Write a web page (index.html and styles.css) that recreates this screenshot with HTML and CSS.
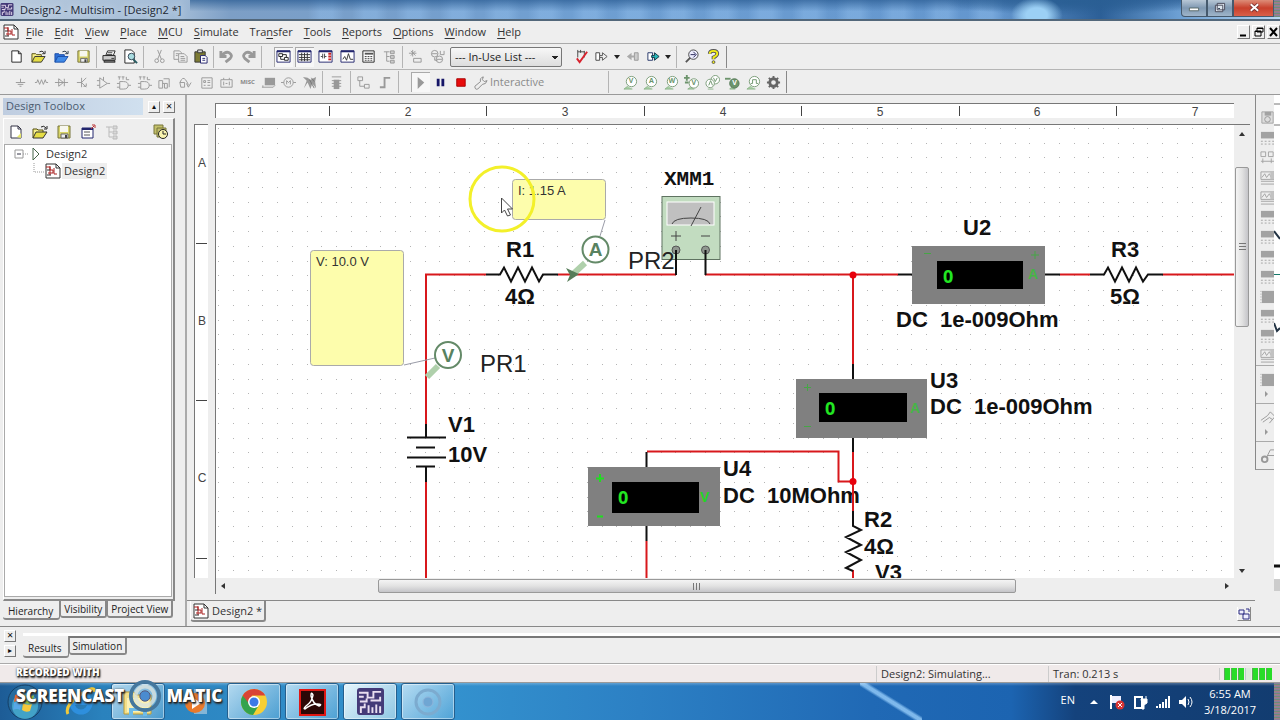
FILE: index.html
```html
<!DOCTYPE html>
<html lang="en">
<head>
<meta charset="utf-8">
<title>Design2 - Multisim - [Design2 *]</title>
<link rel="stylesheet" href="styles.css">
</head>
<body>
<svg class="defs" aria-hidden="true">
  <defs>
    <symbol id="new" viewBox="0 0 16 16"><path d="M3 2h7l3 3v9H3z" fill="#fff" stroke="#222"/><path d="M10 2v3h3" fill="none" stroke="#222"/></symbol>
    <symbol id="newy" viewBox="0 0 16 16"><path d="M3 2h7l3 3v9H3z" fill="#fff" stroke="#334"/><path d="M10 2v3h3" fill="none" stroke="#334"/><path d="M9 13l4-4v5z" fill="#e8e86a"/></symbol>
    <symbol id="open" viewBox="0 0 16 16"><path d="M1 14V5h4l1 1h5v2" fill="#f6f08a" stroke="#554f10"/><path d="M1 14l3-6h11l-4 6z" fill="#e5dd45" stroke="#333"/><path d="M9 3q3-2 5 1m1-2v3h-3" fill="none" stroke="#222"/></symbol>
    <symbol id="openb" viewBox="0 0 16 16"><path d="M1 14V5h4l1 1h5v2" fill="#2d6fd6" stroke="#1c4ea8"/><path d="M1 14l3-6h11l-4 6z" fill="#3f8ae8" stroke="#1c4ea8"/><path d="M9 3q3-2 5 1m1-2v3h-3" fill="none" stroke="#234"/></symbol>
    <symbol id="save" viewBox="0 0 16 16"><path d="M2 2h12v12H2z" fill="#d8d468" stroke="#77743a"/><path d="M4 2h8v6H4z" fill="#f7f7ee"/><path d="M5 10h7v4H5z" fill="#eee" stroke="#666"/><path d="M9 11h2v3H9z" fill="#444"/></symbol>
    <symbol id="print" viewBox="0 0 16 16"><path d="M4 7l2-5h8l-2 5z" fill="#fff" stroke="#222"/><path d="M1 7h13v5H1z" fill="#ccc" stroke="#222"/><path d="M3 12h10l1 2H2z" fill="#888" stroke="#222"/><path d="M6 4h5M5 6h6M10 10h3" stroke="#333"/></symbol>
    <symbol id="preview" viewBox="0 0 16 16"><path d="M2 1h7l3 3v11H2z" fill="#fff" stroke="#222"/><circle cx="9" cy="8" r="3.500" fill="#a9dce0" stroke="#345"/><path d="M11 11l4 4" stroke="#265a60" stroke-width="2"/></symbol>
    <symbol id="cut" viewBox="0 0 16 16"><g fill="none" stroke="#999"><path d="M6 1l4 10M10 1L6 11"/><circle cx="5" cy="12.500" r="2"/><circle cx="11" cy="12.500" r="2"/></g></symbol>
    <symbol id="copy" viewBox="0 0 16 16"><g fill="#eee" stroke="#999"><path d="M1 2h6l2 2v7H1z"/><path d="M6 5h6l3 3v6H6z"/><path d="M8 8h4M8 10h5M8 12h5M3 5h3M3 7h2"/></g></symbol>
    <symbol id="paste" viewBox="0 0 16 16"><path d="M2 3h11v11H2z" fill="#7d7b35" stroke="#333"/><path d="M5 1h5v3H5z" fill="#ddd" stroke="#333"/><path d="M8 7h5l2 2v6H8z" fill="#fff" stroke="#23236d"/><path d="M10 10h3M10 12h3" stroke="#23236d"/></symbol>
    <symbol id="undo" viewBox="0 0 16 16"><path d="M2 2v6h6M3 7q4-5 8-3 4 3 1 6l-5 4" fill="none" stroke="#999" stroke-width="3"/></symbol>
    <symbol id="redo" viewBox="0 0 16 16"><path d="M14 2v6H8M13 7Q9 2 5 4q-4 3-1 6l5 4" fill="none" stroke="#999" stroke-width="3"/></symbol>
    <symbol id="vtree" viewBox="0 0 16 16"><path d="M1 2h14v12H1z" fill="#fff" stroke="#22266e"/><path d="M1 2.500h14" stroke="#22266e" stroke-width="2"/><path d="M3 5h4v3H3zM9 9h4v3H9zM5 8v3h4M7 6h4v3" fill="none" stroke="#222"/></symbol>
    <symbol id="vgrid" viewBox="0 0 16 16"><path d="M1 2h14v12H1z" fill="#fff" stroke="#22266e"/><path d="M1 2.500h14" stroke="#22266e" stroke-width="2"/><path d="M5 4v9M8 4v9M11 4v9M2 6h12M2 9h12M2 11.500h12" stroke="#333"/></symbol>
    <symbol id="vcomp" viewBox="0 0 16 16"><path d="M1 2h14v12H1z" fill="#fff" stroke="#22266e"/><path d="M1 2.500h14" stroke="#22266e" stroke-width="2"/><path d="M3 8h2M5 5v5M7 5v5M7 8h2" stroke="#444"/><path d="M11 5h3M11 8h3M11 11h3" stroke="#c22" stroke-width="2"/></symbol>
    <symbol id="vgraph" viewBox="0 0 16 16"><path d="M1 2h14v12H1z" fill="#fff" stroke="#22266e"/><path d="M1 2.500h14" stroke="#22266e" stroke-width="2"/><path d="M3 11l2-3 2 4 2-7 2 6h3" fill="none" stroke="#333"/></symbol>
    <symbol id="vcalc" viewBox="0 0 16 16"><path d="M2 2h12v12H2z" fill="#fff" stroke="#222"/><path d="M4 5h9" stroke="#555" stroke-width="2"/><path d="M4 8h9M4 10h9M4 12h9" stroke="#444" stroke-dasharray="2 1"/></symbol>
    <symbol id="vhier" viewBox="0 0 16 16"><g fill="none" stroke="#999"><path d="M2 3h6M5 3v10h3M5 8h3"/><path d="M9 2h4v3H9zM9 7h4v3H9zM9 12h4v3H9z" fill="#ccc"/></g></symbol>
    <symbol id="place" viewBox="0 0 16 16"><g fill="none" stroke="#999"><path d="M5 1v7M1 4.500h8M3 2l5 5M8 2L3 7M6 10h8v4H6z"/></g></symbol>
    <symbol id="db" viewBox="0 0 16 16"><g fill="none" stroke="#999"><circle cx="5" cy="5" r="3.500"/><circle cx="10" cy="11" r="3.500"/><path d="M2 5h6M7 11h6M11 2v4h4V2M5 9v3h3"/></g></symbol>
    <symbol id="erc" viewBox="0 0 16 16"><path d="M4 1v8M4 3h7M7 1v3M11 2v7" stroke="#444" fill="none"/><path d="M3 10l3 4 8-11" fill="none" stroke="#d8222e" stroke-width="2"/></symbol>
    <symbol id="fwd" viewBox="0 0 16 16"><path d="M2 4h4v8H2z" fill="#fff" stroke="#444"/><path d="M6 7h3V4l5 4-5 4V9H6z" fill="#eee" stroke="#555"/></symbol>
    <symbol id="back" viewBox="0 0 16 16"><path d="M10 4h4v8h-4z" fill="#ccc" stroke="#999"/><path d="M10 7H7V4L2 8l5 4v-3h3z" fill="#aaa"/></symbol>
    <symbol id="fwdc" viewBox="0 0 16 16"><path d="M2 4h5v8H2z" fill="#fff" stroke="#236"/><path d="M6 7h3V4l5 4-5 4V9H6z" fill="#27b7b7" stroke="#134"/></symbol>
    <symbol id="find" viewBox="0 0 16 16"><path d="M7 9l-5 5" stroke="#555" stroke-width="2"/><circle cx="10" cy="6" r="5" fill="#eef" stroke="#444"/><path d="M7 6h5M10 3l3 3-3 3" stroke="#225" fill="none"/></symbol>
    <symbol id="help" viewBox="0 0 16 16"><path d="M4 5q0-3 4-3t4 3q0 2-4 4v2" fill="none" stroke="#555" stroke-width="4"/><path d="M4 5q0-3 4-3t4 3q0 2-4 4v2" fill="none" stroke="#f3ef16" stroke-width="2"/><circle cx="8" cy="14" r="1.500" fill="#f3ef16" stroke="#555"/></symbol>
    <symbol id="gnd" viewBox="0 0 16 16"><path d="M8 4v4M3 8h10M5 10h6M7 12h2" stroke="#999" fill="none"/></symbol>
    <symbol id="res" viewBox="0 0 16 16"><path d="M1 8h2l1-3 2 5 2-5 2 5 2-5 1 3h2" stroke="#999" fill="none"/></symbol>
    <symbol id="diode" viewBox="0 0 16 16"><path d="M1 8h14M5 4v8l5-4zM11 4v8" stroke="#999" fill="none"/></symbol>
    <symbol id="bjt" viewBox="0 0 16 16"><path d="M2 8h5M7 3v10M7 8l5-5M7 8l5 5M9 12h3v-3" stroke="#999" fill="none"/></symbol>
    <symbol id="opamp" viewBox="0 0 16 16"><path d="M4 3v11l8-5zM1 6h3M1 11h3M12 9h3M8 2v4" stroke="#999" fill="none"/></symbol>
    <symbol id="ttl" viewBox="0 0 16 16"><path d="M2 2h3M3.500 2v3M6 2h3M7.500 2v3M11 2v3h3M4 7h4q5 0 5 4t-5 4H4zM1 9h3M1 13h3M13 11h3" stroke="#999" fill="none"/></symbol>
    <symbol id="misd" viewBox="0 0 16 16"><path d="M2 14V6h4v8zM8 14V9h3v5zM7 4h6v9M6 9h2" stroke="#999" fill="none"/></symbol>
    <symbol id="mixed" viewBox="0 0 16 16"><path d="M2 8q3-7 6-3t3 6M2 8h5v5H3zM9 9l2 4 3-5" stroke="#999" fill="none"/></symbol>
    <symbol id="ind" viewBox="0 0 16 16"><path d="M3 3h11v11H3zM5 6h2v2H5zM9 6h3M9 8h3M5 11h2M9 11h3" stroke="#999" fill="none"/></symbol>
    <symbol id="pow" viewBox="0 0 16 16"><path d="M2 5h12v8H2zM5 3v2M11 3v2M5 7v4M11 7v4M7 9h2" stroke="#999" fill="none"/></symbol>
    <symbol id="adv" viewBox="0 0 16 16"><path d="M4 3h11v8H4z" fill="#999"/><path d="M1 13h12l2-2M2 11v2" stroke="#999" fill="none"/></symbol>
    <symbol id="motor" viewBox="0 0 16 16"><circle cx="8" cy="8" r="5" fill="none" stroke="#999"/><path d="M0 8h3M13 8h3M6 10V6l2 2 2-2v4" fill="none" stroke="#999"/></symbol>
    <symbol id="ni" viewBox="0 0 16 16"><path d="M1 2l5 1 3 2 6-3-1 5 1 7-4-5-2 6-3-7-4 6 3-8z" fill="#999"/><path d="M8 5l5 9M10 3l3 4" stroke="#777"/></symbol>
    <symbol id="mcu" viewBox="0 0 16 16"><path d="M5 5h6v10H5z" fill="#999"/><path d="M3 6h10M3 9h10M3 12h10M3 2h10" stroke="#999"/></symbol>
    <symbol id="hb" viewBox="0 0 16 16"><path d="M2 2h5v4H2zM9 10h5v4H9zM4 6v6h5" stroke="#999" fill="none"/></symbol>
    <symbol id="bus" viewBox="0 0 16 16"><path d="M2 13h5V3h6" stroke="#999" stroke-width="2" fill="none"/></symbol>
    <symbol id="wrench" viewBox="0 0 16 16"><path d="M2 12l6-5q-1-4 3-5l-1 3 2 2 3-1q-1 4-5 4l-5 5q-3 1-3-3z" fill="#eee" stroke="#888"/></symbol>
    <symbol id="gear" viewBox="0 0 16 16"><circle cx="8" cy="8" r="4" fill="none" stroke="#666" stroke-width="3"/><path d="M8 1v3M8 12v3M1 8h3M12 8h3M3 3l2 2M11 11l2 2M13 3l-2 2M5 11l-2 2" stroke="#666" stroke-width="2"/></symbol>
    <symbol id="probe" viewBox="0 0 16 16"><path d="M5 12l-4 3h9" fill="#a8cfa5" stroke="#8fb58c"/><circle cx="9" cy="7" r="5.500" fill="#fff" stroke="#7a9c77"/></symbol>
    <symbol id="probe-diff" viewBox="0 0 16 16"><path d="M7 13l-3 2h7" fill="#a8cfa5" stroke="#8fb58c"/><path d="M0 3h6M3 0v6M1 8h4" stroke="#6d946c" stroke-width="2"/><circle cx="10.500" cy="9" r="5" fill="#fff" stroke="#7a9c77"/></symbol>
    <symbol id="probe-two" viewBox="0 0 16 16"><circle cx="11" cy="5" r="4.500" fill="#fff" stroke="#7a9c77"/><circle cx="5.500" cy="9" r="4.500" fill="#fff" stroke="#7a9c77"/><path d="M4 11l2-5 2 5M9 3l2 4 2-4" fill="none" stroke="#6d946c"/><path d="M3 15h6" stroke="#8fb58c"/></symbol>
    <symbol id="probe-ref" viewBox="0 0 16 16"><path d="M0 4h6" stroke="#6d946c" stroke-width="2"/><path d="M7 13l-2 2h6" fill="#a8cfa5" stroke="#8fb58c"/><circle cx="10" cy="9" r="5" fill="#6d946c" stroke="#567a58"/></symbol>
    <symbol id="probe-dig" viewBox="0 0 16 16"><path d="M5 12l-4 3h9" fill="#a8cfa5" stroke="#8fb58c"/><circle cx="9" cy="7" r="5.500" fill="#fff" stroke="#7a9c77"/><path d="M5 9h2V5h4v4h2" fill="none" stroke="#6d946c"/></symbol>
    <symbol id="sheet" viewBox="0 0 16 16"><path d="M1 1h10l4 4v10H1z" fill="#fff" stroke="#333"/><path d="M11 1v4h4" fill="none" stroke="#333"/><path d="M1 4h4v3h3v3H3M5 3v9M9 5v6h3" fill="none" stroke="#a22"/><path d="M2 7h3M2 12h4" stroke="#333"/></symbol>
    <symbol id="props" viewBox="0 0 16 16"><path d="M2 4h11v10H2z" fill="#fff" stroke="#22266e"/><path d="M2 5h11" stroke="#22266e" stroke-width="2"/><path d="M4 8h6M4 11h6" stroke="#555"/><path d="M11 5l3-3M12 1h3v3" stroke="#b33" fill="none"/></symbol>
    <symbol id="clock" viewBox="0 0 16 16"><path d="M1 1h9v9H1z" fill="#c3c06a" stroke="#77743a"/><path d="M4 4h9v9H4z" fill="#c3c06a" stroke="#77743a"/><circle cx="10" cy="10" r="4.500" fill="#f9f4b0" stroke="#222"/><path d="M10 7v3h3" stroke="#222" fill="none"/></symbol>
    <symbol id="inst" viewBox="0 0 16 16"><path d="M1 2h14v7H1z" fill="#a2a2a2"/><path d="M1 12h14M1 15h14" stroke="#a2a2a2" stroke-dasharray="2 2"/></symbol>
    <symbol id="insta" viewBox="0 0 16 16"><g fill="none" stroke="#a2a2a2"><path d="M1 2h14v8H1zM2 8l3-4 2 4 3-4 2 4M1 12h14M1 15h14"/></g><path d="M11 2h4v8h-4z" fill="#c2c2c2"/></symbol>
    <symbol id="instm" viewBox="0 0 16 16"><path d="M2 2h12v12H2z" fill="#ddd" stroke="#a2a2a2"/><path d="M5 2h7v4H5z" fill="#a2a2a2"/><circle cx="8" cy="10" r="3" fill="none" stroke="#999"/></symbol>
    <symbol id="instf" viewBox="0 0 16 16"><path d="M1 2h5v5H1zM9 2h5v5H9zM1 12h14M3 9v5M12 9v5" fill="none" stroke="#a2a2a2"/></symbol>
    <symbol id="instb" viewBox="0 0 16 16"><path d="M2 2h13v13H2z" fill="#a2a2a2"/><path d="M1 2v13" stroke="#a2a2a2" stroke-dasharray="1 2"/></symbol>
    <symbol id="clamp" viewBox="0 0 16 16"><circle cx="5" cy="12" r="3" fill="none" stroke="#999" stroke-width="2"/><path d="M7 10l4-8h5M8 8h7" fill="none" stroke="#999"/></symbol>
    <symbol id="lv" viewBox="0 0 16 16"><path d="M1 11l7-5 3-4 5 5-6 7M3 13l7-5 3 2" fill="none" stroke="#999"/></symbol>
    <symbol id="msim" viewBox="0 0 28 28"><rect width="28" height="28" rx="3" fill="#443a78"/><path d="M2 5h9v5h6V4h8M3 14h7v-3M14 13h10v-4M2 9h5M4 26v-6h4v-4M12 26v-8M16 26v-6M20 26v-9M24 26v-7" fill="none" stroke="#e9def0" stroke-width="2"/></symbol>
  </defs>
</svg>

<header class="titlebar">
  <svg class="app-icon"><use href="#msim"/></svg>
  <h1>Design2 - Multisim - [Design2 *]</h1>
  <div class="window-buttons">
    <button class="wb-min" aria-label="Minimize"><svg viewBox="0 0 26 16"><path d="M8 8h10v3H8z" fill="#fff" stroke="#566"/></svg></button>
    <button class="wb-max" aria-label="Restore"><svg viewBox="0 0 26 16"><path d="M10 3h8v7h-8zM8 5h8v7H8z" fill="#dde6ef" stroke="#445"/><path d="M11 8h2v1h-2z" fill="#345"/></svg></button>
    <button class="wb-close" aria-label="Close"><svg viewBox="0 0 42 16"><path d="M18 4l8 7M26 4l-8 7" stroke="#733" stroke-width="4"/><path d="M18 4l8 7M26 4l-8 7" stroke="#fff" stroke-width="2"/></svg></button>
    <span class="edge"></span>
  </div>
</header>

<nav class="menubar">
  <svg class="i16"><use href="#sheet"/></svg>
  <button><u>F</u>ile</button><button><u>E</u>dit</button><button><u>V</u>iew</button><button><u>P</u>lace</button><button><u>M</u>CU</button><button><u>S</u>imulate</button><button>Tra<u>n</u>sfer</button><button><u>T</u>ools</button><button><u>R</u>eports</button><button><u>O</u>ptions</button><button><u>W</u>indow</button><button><u>H</u>elp</button>
  <div class="mdi">
    <button aria-label="Minimize document"><svg viewBox="0 0 12 12"><path d="M2 9.500h6" stroke="#000" stroke-width="2"/></svg></button>
    <button aria-label="Restore document"><svg viewBox="0 0 12 12"><path d="M4 2h6v4H4zM2 5h6v5H2z" fill="#eee" stroke="#000"/><path d="M4 2.500h6M2 5.500h6" stroke="#000"/></svg></button>
    <button aria-label="Close document"><svg viewBox="0 0 12 12"><path d="M2 2l7 8M9 2l-7 8" stroke="#000" stroke-width="2"/></svg></button>
  </div>
</nav>

<div class="toolbar top">
  <div class="grp g-file"><button aria-label="New"><svg><use href="#new"/></svg></button><button aria-label="Open"><svg><use href="#open"/></svg></button><button aria-label="Open samples"><svg><use href="#openb"/></svg></button><button aria-label="Save"><svg><use href="#save"/></svg></button></div>
  <div class="grp g-print"><button aria-label="Print"><svg><use href="#print"/></svg></button><button aria-label="Print preview"><svg><use href="#preview"/></svg></button></div>
  <div class="grp g-clip"><button aria-label="Cut"><svg><use href="#cut"/></svg></button><button aria-label="Copy"><svg><use href="#copy"/></svg></button><button aria-label="Paste"><svg><use href="#paste"/></svg></button></div>
  <div class="grp g-undo"><button aria-label="Undo"><svg><use href="#undo"/></svg></button><button aria-label="Redo"><svg><use href="#redo"/></svg></button></div>
  <div class="grp g-view"><button class="on" aria-label="Design toolbox"><svg><use href="#vtree"/></svg></button><button class="on" aria-label="Spreadsheet"><svg><use href="#vgrid"/></svg></button><button aria-label="Netlist"><svg><use href="#vcomp"/></svg></button><button aria-label="Grapher"><svg><use href="#vgraph"/></svg></button><button aria-label="Postprocessor"><svg><use href="#vcalc"/></svg></button><button aria-label="Parent sheet"><svg><use href="#vhier"/></svg></button></div>
  <div class="grp g-db"><button aria-label="Component wizard"><svg><use href="#place"/></svg></button><button aria-label="Database manager"><svg><use href="#db"/></svg></button></div>
  <select class="in-use" aria-label="In-use list"><option>--- In-Use List ---</option></select>
  <div class="grp g-erc"><button aria-label="Rules check"><svg><use href="#erc"/></svg></button><button aria-label="Transfer"><svg><use href="#fwd"/></svg></button><button class="drop" aria-label="Transfer options"></button><button aria-label="Back annotate"><svg><use href="#back"/></svg></button><button aria-label="Forward annotate"><svg><use href="#fwdc"/></svg></button><button class="drop" aria-label="Annotate options"></button></div>
  <div class="grp g-help"><button aria-label="Find examples"><svg><use href="#find"/></svg></button><button aria-label="Help"><svg><use href="#help"/></svg></button></div>
</div>

<div class="toolbar bottom">
  <div class="grp g-comp"><button aria-label="Source"><svg><use href="#gnd"/></svg></button><button aria-label="Basic"><svg><use href="#res"/></svg></button><button aria-label="Diode"><svg><use href="#diode"/></svg></button><button aria-label="Transistor"><svg><use href="#bjt"/></svg></button><button aria-label="Analog"><svg><use href="#opamp"/></svg></button><button aria-label="TTL"><svg><use href="#ttl"/></svg></button><button aria-label="CMOS"><svg><use href="#ttl"/></svg></button><button aria-label="Misc digital"><svg><use href="#misd"/></svg></button><button aria-label="Mixed"><svg><use href="#mixed"/></svg></button><button aria-label="Indicator"><svg><use href="#ind"/></svg></button><button aria-label="Power"><svg><use href="#pow"/></svg></button><button class="misc">MISC</button><button aria-label="Peripherals"><svg><use href="#adv"/></svg></button><button aria-label="Electromechanical"><svg><use href="#motor"/></svg></button><button aria-label="NI component"><svg><use href="#ni"/></svg></button></div>
  <div class="grp g-mcu"><button aria-label="Microcontroller"><svg><use href="#mcu"/></svg></button></div>
  <div class="grp g-bus"><button aria-label="Hierarchical block"><svg><use href="#hb"/></svg></button><button aria-label="Bus"><svg><use href="#bus"/></svg></button></div>
  <div class="grp g-run"><button class="on" aria-label="Run"><svg viewBox="0 0 16 16"><path d="M5 2l7 6-7 7z" fill="#999"/></svg></button><button aria-label="Pause"><svg viewBox="0 0 16 16"><path d="M4 4h3v8H4zM9 4h3v8H9z" fill="#141466"/></svg></button><button aria-label="Stop"><svg viewBox="0 0 16 16"><path d="M4 4h9v8H4z" fill="#e80c0c" stroke="#a00"/></svg></button><button class="mode"><svg><use href="#wrench"/></svg>Interactive</button></div>
  <div class="grp g-probe"><button class="pb"><svg><use href="#probe"/></svg><b>V</b></button><button class="pb"><svg><use href="#probe"/></svg><b>A</b></button><button class="pb"><svg><use href="#probe"/></svg><b>W</b></button><button class="pb low"><svg><use href="#probe-diff"/></svg><b>V</b></button><button aria-label="Voltage and current"><svg><use href="#probe-two"/></svg></button><button class="pb low light"><svg><use href="#probe-ref"/></svg><b>V</b></button><button aria-label="Digital probe"><svg><use href="#probe-dig"/></svg></button><button aria-label="Probe settings"><svg><use href="#gear"/></svg></button></div>
</div>

<main class="workbench">
  <aside class="toolbox">
    <div class="tb-head"><h2>Design Toolbox</h2><button aria-label="Collapse">▴</button><button aria-label="Close toolbox">✕</button></div>
    <div class="tb-panel">
      <div class="tb-tools"><button aria-label="New design"><svg><use href="#newy"/></svg></button><button aria-label="Open design"><svg><use href="#open"/></svg></button><button aria-label="Save design"><svg><use href="#save"/></svg></button><button aria-label="Close design"><svg><use href="#props"/></svg></button><button aria-label="Rename"><svg><use href="#vhier"/></svg></button><button class="last" aria-label="Recent"><svg><use href="#clock"/></svg></button></div>
      <div class="tree">
        <div class="node"><svg class="branch" viewBox="0 0 30 16"><path d="M4 4h8v8H4z" fill="#fff" stroke="#999"/><path d="M6 8h4" stroke="#334"/><path d="M12 8h6" stroke="#999" stroke-dasharray="1 1"/><path d="M22 2v12l6-6z" fill="#fff" stroke="#47674a"/></svg><span>Design2</span></div>
        <div class="node child"><svg class="twig" viewBox="0 0 12 16"><path d="M1 0v9h10" fill="none" stroke="#999" stroke-dasharray="1 1"/></svg><svg class="i16"><use href="#sheet"/></svg><span class="sel">Design2</span></div>
      </div>
    </div>
    <div class="tabs"><button class="active">Hierarchy</button><button>Visibility</button><button>Project View</button></div>
  </aside>

  <section class="doc">
    <div class="sheet">
      <svg class="ruler-x" aria-hidden="true"><g transform="translate(-216 -104)"><path d="M329.500 106v10M486.500 106v10M644.500 106v10M801.500 106v10M959.500 106v10M1116.500 106v10" stroke="#444"/><text x="250" y="116">1</text><text x="408" y="116">2</text><text x="565" y="116">3</text><text x="723" y="116">4</text><text x="880" y="116">5</text><text x="1037" y="116">6</text><text x="1195" y="116">7</text></g></svg>
      <svg class="ruler-y" aria-hidden="true"><g transform="translate(-195 -125)"><path d="M196 243.500h11M196 400.500h11M196 558.500h11" stroke="#444"/><text x="202" y="167">A</text><text x="202" y="325">B</text><text x="202" y="482">C</text></g></svg>
      <svg class="canvas" role="img" aria-label="Circuit schematic">
        <defs><pattern id="dots" x="2" y="3" width="59" height="59" patternUnits="userSpaceOnUse"><path fill="#b4b4b4" d="M0 0h1v1h-1zM15 0h1v1h-1zM30 0h1v1h-1zM44 0h1v1h-1zM0 15h1v1h-1zM15 15h1v1h-1zM30 15h1v1h-1zM44 15h1v1h-1zM0 29h1v1h-1zM15 29h1v1h-1zM30 29h1v1h-1zM44 29h1v1h-1zM0 44h1v1h-1zM15 44h1v1h-1zM30 44h1v1h-1zM44 44h1v1h-1z"/></pattern></defs>
        <rect width="100%" height="100%" fill="url(#dots)"/>
        <g transform="translate(-216 -125)">
          <g class="meter"><rect x="912" y="246" width="133" height="58"/><rect x="796" y="379" width="131" height="59"/><rect x="588" y="467" width="132" height="59"/></g>
          <g class="lcd"><rect x="937" y="261" width="86" height="28"/><rect x="819" y="393" width="88" height="29"/><rect x="612" y="482" width="87" height="31"/></g>
          <rect x="662" y="196.500" width="58" height="63" fill="#c2dcc0" stroke="#5f7361"/>
          <rect x="667" y="202" width="47" height="23" fill="#c0c0c0" stroke="#fff"/>
          <path d="M672 224q2-6 19-6t19 6M691 226l10-19" fill="none" stroke="#444"/>
          <path d="M671 236h10M676 231v10M701 236h9" stroke="#444"/>
          <circle cx="676" cy="250" r="4" fill="#909890" stroke="#555"/><circle cx="705.500" cy="250" r="4" fill="#909890" stroke="#555"/>
          <g class="label"><text x="506" y="257">R1</text><text x="505" y="304">4Ω</text><text x="963" y="235">U2</text><text x="896" y="327">DC&#160; 1e-009Ohm</text><text x="1111" y="257">R3</text><text x="1110" y="304">5Ω</text><text x="930" y="388">U3</text><text x="930" y="414">DC&#160; 1e-009Ohm</text><text x="723" y="476">U4</text><text x="723" y="503">DC&#160; 10MOhm</text><text x="864" y="527">R2</text><text x="864" y="554">4Ω</text><text x="875" y="580">V3</text><text x="448" y="432">V1</text><text x="448" y="462">10V</text></g>
          <text class="mono" x="664" y="185">XMM1</text>
          <g class="ref"><text x="480" y="372">PR1</text><text x="628" y="269">PR2</text></g>
          <g class="wire"><path d="M486 274.500H426V424M426 482V580M558 274.500H676M705 274.500H898M1060 274.500H1090M1163 274.500H1236M853 274V364M853 452V511M853 570V580M647 451.500H838.500V481.500H853M646.500 541V580"/></g>
          <g class="lead"><path d="M486 274.500H500l4-7 7 14 7-14 7 14 7-14 7 14 4-7H558M676 250V275M705.500 250V275M898 274.500H912M1045 274.500H1060M1090 274.500H1104l4-7 7 14 7-14 7 14 7-14 7 14 5-7H1163M853 364V379M853 438V452M646.500 452V467M646.500 526V541M853 511V526l8 4-15 7 15 8-15 7 15 8-15 8 7 3M426 424V437M407 437.500H446M416 447.500H435M407 457.500H446M416 466.500H435M426 467V482"/></g>
          <circle cx="853" cy="275" r="3.500" fill="#e8000c"/><circle cx="853" cy="481.500" r="3.500" fill="#e8000c"/>
          <g class="digit"><text x="943" y="283">0</text><text x="825" y="415">0</text><text x="618" y="504">0</text></g>
          <g class="unit"><text x="1028" y="279" opacity=".6">A</text><text x="910" y="413" opacity=".6">A</text><text x="700" y="502">V</text></g>
          <path d="M924 253.500h7M1031 255h8M1035 251v8M804 387.500h7M807.500 384v7M804 426.500h7" stroke="#38b038" opacity=".8"/><path d="M596 478.500h8M600 474v8M597 516.500h6" stroke="#20dd20" stroke-width="2"/>
          <path d="M404 365l31-7M605 220l-5 16" stroke="#9a9ca8"/>
          <g class="note"><rect x="310.500" y="250.500" width="93" height="115" rx="3"/><rect x="512.500" y="179.500" width="93" height="40" rx="3"/></g>
          <g class="note-text"><text x="316" y="266">V: 10.0 V</text><text x="518" y="195">I: 1.15 A</text></g>
          <path d="M427 377l11-11M572 275l13-12" stroke="#afd0ab" stroke-width="6"/>
          <path d="M566 268l13 6-12 8 3-7z" fill="#557c58"/>
          <g class="probe"><circle cx="448" cy="355" r="13"/><circle cx="595.500" cy="249.500" r="13"/><text x="448" y="362">V</text><text x="595.500" y="256">A</text></g>
          <circle cx="502" cy="199" r="32" fill="none" stroke="#f3f02a" stroke-width="3"/>
          <path d="M501.500 198v15l3-3 3 6 3-1-3-6h5z" fill="#fff" stroke="#444"/>
        </g>
      </svg>
      <div class="vscroll" aria-hidden="true"><i class="arrow up"></i><i class="s1"></i><i class="thumb"><b></b></i><i class="s2"></i><i class="arrow down"></i></div>
      <div class="hscroll" aria-hidden="true"><i class="arrow left"></i><i class="s1"></i><i class="thumb"><b></b></i><i class="s2"></i><i class="arrow right"></i></div>
    </div>
    <div class="doc-tabs"><button><svg class="i16"><use href="#sheet"/></svg>Design2 *</button><button class="wins" aria-label="Windows"><svg viewBox="0 0 12 12"><path d="M1 2h5v4H1zM5 6h6v5H5zM8 1h3v3" fill="#eef" stroke="#2a2a80"/></svg></button></div>
  </section>

  <aside class="instruments">
    <button aria-label="Multimeter"><svg><use href="#instm"/></svg></button><button aria-label="Function generator"><svg><use href="#inst"/></svg></button><button aria-label="Wattmeter"><svg><use href="#instf"/></svg></button><button aria-label="Oscilloscope"><svg><use href="#insta"/></svg></button><button aria-label="Four channel oscilloscope"><svg><use href="#insta"/></svg></button><button aria-label="Bode plotter"><svg><use href="#inst"/></svg></button><button aria-label="Frequency counter"><svg><use href="#inst"/></svg></button><button aria-label="Word generator"><svg><use href="#inst"/></svg></button><button aria-label="Logic converter"><svg><use href="#inst"/></svg></button><button aria-label="Logic analyzer"><svg><use href="#instb"/></svg></button><button aria-label="IV analyzer"><svg><use href="#inst"/></svg></button><button aria-label="Distortion analyzer"><svg><use href="#inst"/></svg></button><button aria-label="Spectrum analyzer"><svg><use href="#insta"/></svg></button>
    <div class="more"><svg><use href="#instb"/></svg><i></i></div>
    <div class="more"><svg><use href="#lv"/></svg><i></i></div>
    <div class="more"><svg><use href="#clamp"/></svg></div>
  </aside>
  <svg class="sliver" aria-hidden="true"><path d="M0 9h6M0 30h6" stroke="#777"/><path d="M0 136l6 8M0 228l3 8 3-3" stroke="#234" stroke-width="2" fill="none"/><path d="M0 179.500h6" stroke="#147a6c"/><path d="M0 471h6" stroke="#111" stroke-width="3"/><path d="M0 484h6v12H0z" fill="#ccc"/><path d="M0 496h6v36H0z" fill="#eee"/></svg>
</main>

<section class="results">
  <div class="res-side"><button aria-label="Close results">✕</button><button aria-label="Expand">▸</button></div>
  <div class="tabs"><button class="active">Results</button><button>Simulation</button></div>
</section>

<div class="status"><span class="st-main"></span><span class="st-sim">Design2: Simulating...</span><span class="st-tran">Tran: 0.213 s</span><span class="st-bars"><i></i><i></i><i></i><i class="off"></i><i></i><i></i><i></i></span></div>

<footer class="taskbar">
  <button class="task orb" aria-label="Start"><svg viewBox="0 0 36 36"><circle cx="18" cy="18" r="17" fill="#276c9f" stroke="#143f66"/><circle cx="18" cy="22" r="13" fill="#4fb9d8" opacity=".7"/><path d="M8 11q5-3 9 0l-2 7q-4-2-8 0z" fill="#e66a32"/><path d="M18 11q4 3 9 0l-2 8q-5 2-9-1z" fill="#9ccb3f"/><path d="M7 19q4-2 8 0l-2 7q-3-2-7 0z" fill="#58a8e8"/><path d="M16 19q4 3 9 1l-2 7q-4 2-8-1z" fill="#f6c83c"/></svg></button>
  <button class="task" aria-label="Internet Explorer"><svg viewBox="0 0 32 32"><circle cx="17" cy="17" r="9" fill="none" stroke="#2e8fdd" stroke-width="5"/><path d="M10 17h16" stroke="#2e8fdd" stroke-width="4"/><path d="M4 28Q0 20 16 9T30 6" fill="none" stroke="#f0c93a" stroke-width="3"/></svg></button>
  <button class="task open" aria-label="Explorer"><svg viewBox="0 0 32 32"><path d="M2 6h10l2 3h15v19H2z" fill="#f3e08a" stroke="#b99a38"/><path d="M5 12h22v14H5z" fill="#fbf1b5"/><path d="M7 30v-8h18v8h-4v-5H11v5z" fill="#6dbbe8"/></svg></button>
  <button class="task" aria-label="Media Player"><svg viewBox="0 0 32 32"><path d="M14 3h13v25H14z" fill="#a8cbe0" opacity=".7"/><circle cx="15" cy="17" r="10" fill="#e9792b"/><path d="M12 11v12l9-6z" fill="#fff"/></svg></button>
  <button class="task open" aria-label="Chrome"><svg viewBox="0 0 32 32"><circle cx="16" cy="16" r="13" fill="#f7cf35"/><path d="M4.700 9.500A13 13 0 0 0 15 29l6-10-5-3z" fill="#34a34d"/><path d="M4.700 9.500A13 13 0 0 1 27.300 9.500H14l-3 8z" fill="#da4336"/><circle cx="16" cy="16" r="6" fill="#fff"/><circle cx="16" cy="16" r="4.500" fill="#3b79e6"/></svg></button>
  <button class="task open" aria-label="Acrobat Reader"><svg viewBox="0 0 32 32"><path d="M4 4h25v25H4z" fill="#2c0807" stroke="#df1714" stroke-width="2"/><path d="M9 23q-2 0 1-3 6-4 7-11-2-4-2 1 2 8 8 10 4-2-2-2-6 0-12 5z" fill="none" stroke="#fff" stroke-width="1.500"/></svg></button>
  <button class="task open lit" aria-label="Multisim"><svg class="sm"><use href="#msim"/></svg></button>
  <button class="task open" aria-label="Recorder"><svg viewBox="0 0 32 32"><circle cx="16" cy="16" r="12" fill="none" stroke="#7cabcf" stroke-width="3"/><circle cx="16" cy="16" r="5" fill="#6fa6d3" stroke="#8fb5da"/></svg></button>
  <div class="tray"><span class="lang">EN</span>
    <svg viewBox="0 0 16 16"><path d="M4 10l4-4 4 4z" fill="#fff"/></svg>
    <svg viewBox="0 0 16 16"><path d="M2 1v14" stroke="#fff" stroke-width="2"/><path d="M3 2h9v7H3z" fill="#eef"/><circle cx="11" cy="11" r="4.500" fill="#d83434"/><path d="M9 9l4 4M13 9l-4 4" stroke="#fff"/></svg>
    <svg viewBox="0 0 16 16"><path d="M3 3h7v11H3z" fill="none" stroke="#fff" stroke-width="2"/><path d="M9 5h6v4l-3 2v4h-2v-5zM10 2v3M14 2v3" fill="#fff" stroke="#fff"/></svg>
    <svg viewBox="0 0 16 16"><path d="M1 12h2v2H1zM4 10h2v4H4zM7 8h2v6H7zM10 5h2v9h-2zM13 2h2v12h-2z" fill="#fff"/></svg>
    <svg viewBox="0 0 16 16"><path d="M1 6h3l4-4v12l-4-4H1z" fill="#fff"/><path d="M10 5q2 3 0 6M12 3q4 5 0 10" fill="none" stroke="#fff"/></svg>
  </div>
  <div class="clock"><time>6:55 AM</time><time>3/18/2017</time></div>
  <span class="edge"></span>
  <div class="watermark"><small>RECORDED WITH</small><strong>SCREENCAST<svg viewBox="0 0 36 36"><circle cx="18" cy="18" r="15" fill="none" stroke="#45779d" stroke-width="4"/><circle cx="18" cy="18" r="10" fill="none" stroke="#dbe3df" stroke-opacity=".8" stroke-width="4"/><circle cx="18" cy="18" r="5.500" fill="#4a8bd0" stroke="#557"/></svg>MATIC</strong></div>
</footer>
</body>
</html>
```
FILE: styles.css
```css
* { box-sizing: border-box; }
body { margin: 0; height: 100vh; display: flex; flex-direction: column; overflow: hidden; background: #eee; color: #333; font: 12px/16px "Open Sans", "Noto Sans", sans-serif; }
button { font: inherit; color: inherit; border: 0; background: none; padding: 0; margin: 0; white-space: nowrap; }
svg { display: block; }
h1, h2 { margin: 0; font: inherit; }
.defs { position: absolute; width: 0; height: 0; }
.i16 { width: 16px; height: 16px; flex: none; }

.titlebar { height: 21px; flex: none; display: flex; align-items: center; border-bottom: 2px solid #52677a; background: radial-gradient(ellipse 26px 18px at 81% 80%, #9cd0f5 40%, transparent), radial-gradient(ellipse 130px 14px at 84% 10%, #2a5f94, transparent), linear-gradient(rgba(40, 90, 145, .7), transparent 60%) 190px 0 no-repeat, repeating-linear-gradient(90deg, transparent 0 8px, rgba(150, 195, 240, .4) 20px 32px, transparent 44px) 300px 0/740px 21px no-repeat, linear-gradient(90deg, #b8c9dc, #a3bcd7 14%, #7d9fc6 18%, #6f9fd2 45%, #6396ce 78%, #2c5f97 86%, #6c9fd3 92%, #b9d7f2); }
.app-icon { width: 14px; height: 13px; }
.titlebar h1 { margin-left: 6px; padding-right: 8px; color: #1c2733; font-size: 11px; text-shadow: 0 0 6px #dde8f3; }
.window-buttons { display: flex; align-self: flex-start; margin-left: auto; height: 17px; }
.window-buttons button { width: 26px; border: 1px solid #45596d; border-top: 0; background: linear-gradient(#b8c7d6, #7f98b2 50%, #9fb5ca); }
.window-buttons svg { width: 100%; height: 16px; }
.window-buttons .wb-min { border-radius: 0 0 0 4px; }
.window-buttons .wb-close { width: 41px; background: linear-gradient(#dd8d78, #c8402c 50%, #d9604a); }
.edge { width: 6px; background: repeating-linear-gradient(#8a7f9d 0 1px, #6d8d79 1px 2px, #a07d84 2px 3px); }

.menubar { height: 23px; flex: none; display: flex; align-items: center; gap: 11px; padding-left: 3px; border-bottom: 1px solid #aaa; font-size: 11px; }
.menubar .i16 { margin-right: -4px; }
.menubar u { text-underline-offset: 2px; }
.mdi { margin-left: auto; display: flex; gap: 2px; }
.mdi button { width: 13px; height: 14px; border: 1px solid #fff; border-right-color: #777; border-bottom-color: #777; }
.mdi svg { width: 12px; height: 12px; }

.toolbar { flex: none; display: flex; align-items: center; height: 26px; }
.toolbar.bottom { border-bottom: 1px solid #999; border-top: 1px solid #b5b5b5; }
.toolbar.top { height: 25px; }
.grp { display: flex; justify-content: space-between; align-items: center; height: 22px; padding: 0 3px; border-right: 1px solid #b4b4b4; flex: none; }
.grp button { width: 19px; height: 20px; display: flex; align-items: center; justify-content: center; }
.grp button svg { width: 15px; height: 15px; flex: none; }
.grp .on { background: #f7f7f7; box-shadow: inset 1px 1px #aaa; }
.grp .drop { width: 9px; }
.drop::after { content: ""; border: 3px solid transparent; border-top: 4px solid #222; border-bottom: 0; }
.g-file { width: 97px; padding-left: 7px; }
.g-print { width: 47px; }
.g-clip { width: 70px; padding-left: 6px; }
.g-undo { width: 48px; }
.g-view { width: 141px; padding-left: 12px; }
.g-db { width: 47px; border-right: 0; }
.in-use { width: 112px; height: 20px; margin: 0 7px 0 0; padding: 0 4px; appearance: none; border: 1px solid #777; border-radius: 2px; color: #222; font: 11px/16px "Open Sans", sans-serif; background: linear-gradient(45deg, transparent 50%, #222 50%) 101px 8px/3px 4px no-repeat, linear-gradient(-45deg, transparent 50%, #222 50%) 104px 8px/3px 4px no-repeat, linear-gradient(#f7f7f7, #ddd); }
.g-erc { width: 108px; }
.g-help { width: 50px; padding-left: 5px; border-right-color: #888; }
.g-comp { width: 323px; padding: 0 3px 0 11px; }
.g-mcu { width: 28px; justify-content: center; }
.g-bus { width: 48px; }
.g-run { width: 210px; padding-left: 12px; justify-content: flex-start; gap: 1px; }
.g-run .mode { width: auto; margin-left: 2px; gap: 2px; color: #8a8a8a; font-size: 11px; }
.g-probe { width: 178px; padding: 0 3px 0 12px; border-right-color: #888; }
.grp .misc { color: #888; font-size: 6px; font-weight: 700; }
.pb { position: relative; color: #6d946c; }
.pb b { position: absolute; left: 0; right: 0; top: 1px; font-size: 7px; line-height: 16px; text-align: center; padding-left: 1px; }
.pb.low b { top: 3px; padding-left: 4px; }
.pb.light { color: #fff; }

.workbench { flex: 1; min-height: 0; display: flex; }
.toolbox { width: 187px; flex: none; padding: 3px 10px 6px 3px; border-right: 2px solid #aaa; display: flex; flex-direction: column; }
.tb-head { display: flex; align-items: center; gap: 3px; height: 17px; margin-bottom: 3px; }
.tb-head h2 { flex: 1; padding-left: 3px; height: 17px; margin-right: 2px; color: #4a5b70; font-size: 11px; background: linear-gradient(90deg, #bfcde0, #d0e0ef); }
.tb-head button, .res-side button { width: 12px; height: 12px; border: 1px solid #fff; border-right-color: #777; border-bottom-color: #777; font: 8px/10px "DejaVu Sans", sans-serif; color: #111; }
.tb-panel { flex: 1; display: flex; flex-direction: column; border: 1px solid #fff; border-right: 2px solid #888; border-bottom: 2px solid #888; }
.tb-tools { display: flex; gap: 8px; align-items: center; height: 25px; padding: 0 4px; }
.tb-tools svg { width: 16px; height: 16px; }
.tb-tools button:nth-child(5) { opacity: .6; }
.tb-tools .last { margin-left: auto; }
.tree { flex: 1; margin: 0 1px 2px 0; background: #fff; border: 1px solid #aaa; font-size: 11px; }
.node { display: flex; align-items: center; height: 17px; padding-left: 3px; }
.branch { width: 30px; height: 16px; margin: 0 5px 0 3px; }
.child { padding-left: 28px; }
.twig { width: 12px; height: 16px; }
.sel { background: #eee; padding: 0 2px; margin-left: 1px; }
.tabs { display: flex; align-items: flex-start; flex: none; font-size: 10px; color: #222; }
.tabs button { height: 17px; padding: 0 3px; border: 1px solid #888; border-top: 0; border-right-width: 2px; border-bottom-width: 2px; border-radius: 0 0 3px 3px; }
.tabs .active { height: 19px; padding: 2px 6px 0 5px; border-left: 0; border-right-width: 1px; }

.doc { flex: 1; min-width: 0; display: flex; flex-direction: column; }
.sheet { flex: 1; min-height: 0; display: grid; grid-template: 16px 5px minmax(0, 1fr) 16px / 14px 7px minmax(0, 1fr) 16px; padding: 8px 5px 6px 7px; border-bottom: 1px solid #888; }
.sheet svg { width: 100%; height: 100%; background: #fff; overflow: hidden; border: solid #777; border-width: 1px 0 0 1px; }
.sheet .ruler-x { grid-area: 1 / 3; height: 15px; }
.sheet .ruler-y { grid-area: 3 / 1; }
.sheet .canvas { grid-area: 3 / 3; }
.ruler-x text, .ruler-y text { font: 12px "Liberation Sans", sans-serif; fill: #444; text-anchor: middle; }
.vscroll { grid-area: 3 / 4; border-top: 1px solid #777; display: flex; flex-direction: column; align-items: center; padding: 7px 0 5px; }
.hscroll { grid-area: 4 / 3; display: flex; align-items: center; padding: 0 5px; border-left: 1px solid #777; }
.hscroll i, .vscroll i { display: block; flex: none; }
.arrow { border: 3px solid transparent; }
.up { border-bottom: 4px solid #333; border-top: 0; }
.down { border-top: 4px solid #333; border-bottom: 0; }
.left { border-right: 4px solid #333; border-left: 0; }
.right { border-left: 4px solid #333; border-right: 0; }
.vscroll .s1 { flex: 31 1 0; }
.vscroll .thumb { flex: 158 1 0; width: 14px; background: linear-gradient(90deg, #f4f4f4, #e2e2e2 50%, #c4c4c8); }
.vscroll .s2 { flex: 243 1 0; }
.hscroll .s1 { flex: 153 1 0; }
.hscroll .thumb { flex: 634 1 0; height: 14px; background: linear-gradient(#f4f4f4, #e2e2e2 50%, #c4c4c8); }
.hscroll .s2 { flex: 209 1 0; }
.sheet .thumb { display: flex; align-items: center; justify-content: center; border: 1px solid #999; border-radius: 2px; }
.thumb b { width: 7px; height: 7px; }
.vscroll b { background: repeating-linear-gradient(#777 0 1px, transparent 1px 3px); }
.hscroll b { background: repeating-linear-gradient(90deg, #777 0 1px, transparent 1px 3px); }
.meter rect { fill: #808080; }
.lcd rect { fill: #000; }
.label text { font: bold 22px "Liberation Sans", sans-serif; fill: #111; }
.mono { font: bold 21px "Liberation Mono", monospace; fill: #111; }
.ref text { font: 24px "Liberation Sans", sans-serif; fill: #222; }
.wire path { fill: none; stroke: #d8181c; stroke-width: 2; }
.lead path { fill: none; stroke: #111; stroke-width: 2; }
.digit text { font: bold 18px "Open Sans", sans-serif; fill: #22e622; }
.unit text { font: bold 14px "Liberation Sans", sans-serif; fill: #20d820; }
.note rect { fill: #fdfdac; stroke: #aaa; }
.note-text text { font: 13px "Liberation Sans", sans-serif; fill: #333; }
.probe circle { fill: #fff; stroke: #648a68; stroke-width: 2; }
.probe text { font: bold 19px "Liberation Sans", sans-serif; fill: #588260; text-anchor: middle; }
.doc-tabs { height: 25px; flex: none; display: flex; justify-content: space-between; padding: 0 4px 0 3px; }
.doc-tabs button { display: flex; align-items: center; gap: 3px; height: 21px; padding: 0 2px 0 2px; font-size: 11px; border: 1px solid #888; border-top: 0; border-left-color: #fff; border-right-width: 2px; border-bottom-width: 2px; border-radius: 0 0 3px 4px; }
.doc-tabs .wins { width: 14px; height: 14px; margin-top: 6px; padding: 0; border-radius: 0; border-width: 1px; }
.wins svg { width: 12px; height: 12px; }

.instruments { width: 19px; flex: none; border-left: 1px solid #888; padding-top: 12px; height: 375px; border-bottom: 1px solid #999; }
.instruments button { display: block; height: 19px; margin-bottom: 1px; padding: 2px 0 0 4px; }
.instruments button:nth-child(5n) { margin-bottom: 0; }
.instruments svg { width: 15px; height: 15px; }
.more { height: 38px; padding: 6px 0 0 4px; border-top: 1px solid #aaa; }
.more i { display: block; width: 0; margin: 4px 0 0 5px; border: 3px solid transparent; border-left-color: #999; border-right: 0; }
.more:last-child { height: auto; }
.sliver { width: 6px; height: 100%; background: #fff; flex: none; }

.results { height: 38px; flex: none; display: flex; gap: 7px; padding-left: 4px; border-top: 1px solid #888; border-bottom: 1px solid #aaa; }
.res-side { padding-top: 3px; display: flex; flex-direction: column; gap: 3px; }
.results .tabs { flex: 1; margin-top: 9px; border-top: 2px solid #777; box-shadow: 0 -3px #fff; }
.results .active { padding: 4px 6px 0 5px; margin-top: -2px; background: #eee; height: 22px; }
.status { height: 19px; flex: none; display: flex; align-items: center; border-top: 1px solid #fff; background: #f0eaea; font-size: 11px; border-bottom: 1px solid #999; }
.st-main { flex: 1; }
.status span + span { border-left: 1px solid #ccc; padding-left: 4px; }
.st-sim { width: 172px; }
.st-tran { width: 171px; }
.st-bars { width: 61px; display: flex; gap: 1px; }
.st-bars i { width: 6px; height: 12px; background: #28dc28; border-left: 1px solid #5ca65c; }
.st-bars .off { background: #dceadc; border-color: #bcc; }

.taskbar { position: relative; height: 37px; flex: none; display: flex; align-items: stretch; color: #fff; background: linear-gradient(rgba(255, 255, 255, .25), transparent 3px), linear-gradient(32deg, transparent 44%, rgba(150, 205, 250, .8) 48% 52%, transparent 56%) 860px 0/62px 37px no-repeat, linear-gradient(90deg, #1d5c96, #2a82bd 8%, #3493cf 34%, #2c80c4 50%, #2069b5 68%, #1c64b1 79%, #14427c 84%, #123c70); padding-left: 7px; gap: 4px; }
.task { width: 54px; display: flex; align-items: center; justify-content: center; }
.task svg { width: 32px; height: 32px; }
.task .sm { width: 27px; height: 27px; }
.orb { width: 36px; }
.orb svg { width: 36px; height: 36px; }
.orb + .task { margin-left: 6px; }
.open { border: 1px solid #245f8e; border-radius: 3px; background: linear-gradient(135deg, rgba(225, 245, 255, .75), rgba(130, 195, 230, .35)); box-shadow: inset 0 0 0 1px rgba(255, 255, 255, .45); }
.lit { background: linear-gradient(135deg, #e5f5fc, #8fc6e3); }
.tray { margin-left: auto; display: flex; align-items: center; gap: 7px; }
.tray svg { width: 16px; height: 16px; }
.lang { margin: 0 4px 4px 0; font-size: 11px; }
.clock { width: 72px; display: flex; flex-direction: column; justify-content: center; text-align: center; font-size: 11px; padding-right: 8px; }
.watermark { position: absolute; left: 16px; top: -18px; font-family: "Open Sans", sans-serif; font-weight: 800; color: #fff; text-shadow: 1px 1px 1px #222, 0 0 2px #444, 1px 2px 2px #333; }
.watermark small { display: block; font-size: 10px; line-height: 14px; }
.watermark strong { display: flex; align-items: center; font-size: 17px; line-height: 28px; font-weight: 800; }
.watermark svg { width: 34px; height: 34px; margin: 0 4px; }
```
